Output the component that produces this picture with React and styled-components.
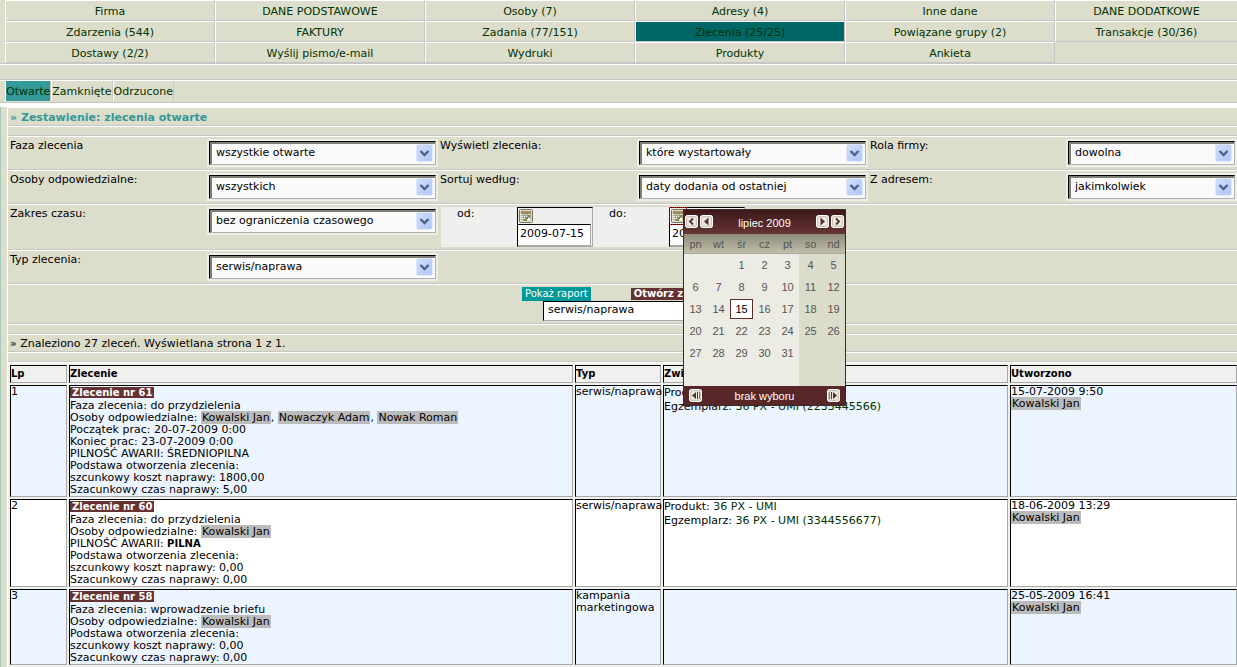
import React from 'react'
import styled, { createGlobalStyle } from 'styled-components'

const navItems = [
  'Firma', 'DANE PODSTAWOWE', 'Osoby (7)', 'Adresy (4)', 'Inne dane', 'DANE DODATKOWE',
  'Zdarzenia (544)', 'FAKTURY', 'Zadania (77/151)', 'Zlecenia (25/25)', 'Powiązane grupy (2)', 'Transakcje (30/36)',
  'Dostawy (2/2)', 'Wyślij pismo/e-mail', 'Wydruki', 'Produkty', 'Ankieta',
]

const tabs = ['Otwarte', 'Zamknięte', 'Odrzucone']

const orders = [
  {
    lp: 1,
    nr: 61,
    phase: 'do przydzielenia',
    people: ['Kowalski Jan', 'Nowaczyk Adam', 'Nowak Roman'],
    extra: ['Początek prac: 20-07-2009 0:00', 'Koniec prac: 23-07-2009 0:00'],
    priority: 'ŚREDNIOPILNA',
    cost: '1800,00',
    time: '5,00',
    type: ['serwis/naprawa'],
    product: '36 PX - UMI',
    unit: '36 PX - UMI (2233445566)',
    created: '15-07-2009 9:50',
  },
  {
    lp: 2,
    nr: 60,
    phase: 'do przydzielenia',
    people: ['Kowalski Jan'],
    extra: [],
    priority: 'PILNA',
    urgent: true,
    cost: '0,00',
    time: '0,00',
    type: ['serwis/naprawa'],
    product: '36 PX - UMI',
    unit: '36 PX - UMI (3344556677)',
    created: '18-06-2009 13:29',
  },
  {
    lp: 3,
    nr: 58,
    phase: 'wprowadzenie briefu',
    people: ['Kowalski Jan'],
    extra: [],
    cost: '0,00',
    time: '0,00',
    type: ['kampania', 'marketingowa'],
    created: '25-05-2009 16:41',
  },
]

const SelectField = ({ id, value }) => (
  <SelectFrame>
    <select id={id} defaultValue={value}>
      <option>{value}</option>
    </select>
    <svg width="17" height="18" viewBox="0 0 17 18" aria-hidden="true">
      <defs>
        <linearGradient id={`${id}-fill`} x1="0" y1="0" x2="1" y2="1">
          <stop offset="0" stopColor="#d3e0fd" />
          <stop offset="1" stopColor="#adc4f6" />
        </linearGradient>
      </defs>
      <rect x="1" y="1" width="15" height="16" rx="1" fill={`url(#${id}-fill)`} stroke="#c3d3f8" />
      <path d="M4.5 7 L8.5 11 L12.5 7" fill="none" stroke="#4d6185" strokeWidth="2.4" />
    </svg>
  </SelectFrame>
)

const CalendarIcon = () => (
  <svg width="14" height="14" viewBox="0 0 14 14" aria-hidden="true">
    <rect x="0.5" y="0.5" width="13" height="13" rx="1" fill="#e2dfcf" stroke="#77705f" />
    <rect x="2" y="2" width="10" height="3" fill="#a08b62" />
    <path d="M2 6h9v5H2z" fill="#fbfaf2" />
    <path d="M2 6.5h10M2 8.5h10M2 10.5h6M4.5 5v7M6.5 5v7M8.5 5v5M11.5 5v5" stroke="#a9a68f" />
    <path d="M7 8h2v2H7zM9 6h2v2H9zM5 10h3v2H5z" fill="#76854f" />
  </svg>
)

const arrows = {
  prevYear: <path d="M8 3.5 L5 6.5 L8 9.5" fill="none" stroke="#5c2c2c" strokeWidth="1.8" />,
  prevMonth: <path d="M8.5 2.5v8L4 6.5z" fill="#5c2c2c" />,
  nextMonth: <path d="M4.5 2.5v8L9 6.5z" fill="#5c2c2c" />,
  nextYear: <path d="M5 3.5 L8 6.5 L5 9.5" fill="none" stroke="#5c2c2c" strokeWidth="1.8" />,
  first: <path d="M7 3v7L3 6.5zM8 3h1v7H8zM10 3h0.6v7H10z" fill="#5c2c2c" />,
  last: <path d="M6 3v7l4-3.5zM4 3h1v7H4zM2.4 3H3v7h-0.6z" fill="#5c2c2c" />,
}

const ArrowButton = ({ kind, label }) => (
  <IconButton type="button" aria-label={label}>
    <svg width="13" height="13" viewBox="0 0 13 13">
      <rect x="0.7" y="0.7" width="11.6" height="11.6" rx="2" fill="#eeece2" stroke="#fff" strokeWidth="1.4" />
      <rect x="1.7" y="1.7" width="9.6" height="9.6" rx="1" fill="none" stroke="#b9a79d" strokeWidth="0.8" />
      {arrows[kind]}
    </svg>
  </IconButton>
)

const weekdays = ['pn', 'wt', 'śr', 'cz', 'pt', 'so', 'nd']

// July 2009 starts on Wednesday, six weeks are always drawn
const days = Array.from({ length: 42 }, (_, i) => (i >= 2 && i < 33 ? i - 1 : ''))

const Calendar = () => (
  <CalendarBox>
    <CalendarHead>
      <ArrowButton kind="prevYear" label="Poprzedni rok" />
      <ArrowButton kind="prevMonth" label="Poprzedni miesiąc" />
      <span>lipiec 2009</span>
      <ArrowButton kind="nextMonth" label="Następny miesiąc" />
      <ArrowButton kind="nextYear" label="Następny rok" />
    </CalendarHead>
    <Weekdays>
      {weekdays.map((d) => <span key={d}>{d}</span>)}
    </Weekdays>
    <Days>
      {days.map((d, i) => (
        <Day key={i} $weekend={i % 7 > 4}>
          {d && <DayButton type="button" $today={d === 15}>{d}</DayButton>}
        </Day>
      ))}
    </Days>
    <CalendarFoot>
      <ArrowButton kind="first" label="Początek" />
      <span>brak wyboru</span>
      <ArrowButton kind="last" label="Koniec" />
    </CalendarFoot>
  </CalendarBox>
)

const DateField = ({ id, label, active, children }) => (
  <DateGroup>
    <label htmlFor={id}>{label}</label>
    <DateBox>
      <PickButton type="button" aria-label="Kalendarz" $active={active}>
        <CalendarIcon />
      </PickButton>
      <input id={id} type="text" defaultValue="2009-07-15" />
      {children}
    </DateBox>
  </DateGroup>
)

const OrderRow = ({ order }) => (
  <tr>
    <td>{order.lp}</td>
    <td>
      <OrderTitle>
        <OrderLink href="#">Zlecenie nr {order.nr}</OrderLink>
      </OrderTitle>
      <div>Faza zlecenia: {order.phase}</div>
      <div>
        Osoby odpowiedzialne:{' '}
        {order.people.map((p, i) => (
          <React.Fragment key={p}>
            {i > 0 && ', '}
            <Person href="#">{p}</Person>
          </React.Fragment>
        ))}
      </div>
      {order.extra.map((line) => <div key={line}>{line}</div>)}
      {order.priority && (
        <div>PILNOŚĆ AWARII: {order.urgent ? <b>{order.priority}</b> : order.priority}</div>
      )}
      <div>Podstawa otworzenia zlecenia:</div>
      <div>szcunkowy koszt naprawy: {order.cost}</div>
      <div>Szacunkowy czas naprawy: {order.time}</div>
    </td>
    <td>{order.type.map((t) => <div key={t}>{t}</div>)}</td>
    <td>
      {order.product && (
        <>
          <Related>Produkt: <a href="#">{order.product}</a></Related>
          <Related>Egzemplarz: <a href="#">{order.unit}</a></Related>
        </>
      )}
    </td>
    <td>
      <div>{order.created}</div>
      <Person href="#">Kowalski Jan</Person>
    </td>
  </tr>
)

const App = () => {
  return (
    <Page>
      <GlobalStyle />
      <Nav>
        {navItems.map((item) => (
          <NavLink key={item} href="#" $active={item.startsWith('Zlecenia')}>{item}</NavLink>
        ))}
      </Nav>
      <Strip />
      <TabBar>
        {tabs.map((tab, i) => (
          <Tab key={tab} href="#" $active={i === 0}>{tab}</Tab>
        ))}
      </TabBar>
      <Main>
        <TitleRow>
          <h1>» Zestawienie: zlecenia otwarte</h1>
        </TitleRow>
        <Spacer />
        <FilterRow>
          <label htmlFor="phase">Faza zlecenia</label>
          <SelectField id="phase" value="wszystkie otwarte" />
          <label htmlFor="show">Wyświetl zlecenia:</label>
          <SelectField id="show" value="które wystartowały" />
          <label htmlFor="role">Rola firmy:</label>
          <SelectField id="role" value="dowolna" />
        </FilterRow>
        <FilterRow>
          <label htmlFor="people">Osoby odpowiedzialne:</label>
          <SelectField id="people" value="wszystkich" />
          <label htmlFor="sort">Sortuj według:</label>
          <SelectField id="sort" value="daty dodania od ostatniej" />
          <label htmlFor="address">Z adresem:</label>
          <SelectField id="address" value="jakimkolwiek" />
        </FilterRow>
        <FilterRow $tall>
          <label htmlFor="range">Zakres czasu:</label>
          <SelectField id="range" value="bez ograniczenia czasowego" />
          <DateRange>
            <DateField id="from" label="od:" />
            <DateField id="to" label="do:" active>
              <Calendar />
            </DateField>
          </DateRange>
        </FilterRow>
        <FilterRow>
          <label htmlFor="type">Typ zlecenia:</label>
          <SelectField id="type" value="serwis/naprawa" />
        </FilterRow>
        <ActionRow>
          <div>
            <ReportButton type="button">Pokaż raport</ReportButton>
            <OpenButton type="button">Otwórz zlecenie</OpenButton>
          </div>
          <PlainSelect aria-label="Typ nowego zlecenia" defaultValue="serwis/naprawa">
            <option>serwis/naprawa</option>
          </PlainSelect>
        </ActionRow>
        <Spacer />
        <InfoRow>» Znaleziono 27 zleceń. Wyświetlana strona 1 z 1.</InfoRow>
        <Spacer />
        <TableArea>
          <OrderTable>
            <colgroup>
              <col width="57" />
              <col />
              <col width="86" />
              <col width="345" />
              <col width="227" />
            </colgroup>
            <thead>
              <tr>
                <th>Lp</th>
                <th>Zlecenie</th>
                <th>Typ</th>
                <th>Związane z</th>
                <th>Utworzono</th>
              </tr>
            </thead>
            <tbody>
              {orders.map((order) => <OrderRow key={order.nr} order={order} />)}
            </tbody>
          </OrderTable>
        </TableArea>
      </Main>
    </Page>
  )
}

const GlobalStyle = createGlobalStyle`
  * {
    box-sizing: border-box;
  }
  body {
    margin: 0;
    background: #fff;
    color: #000;
    font: 11px/12px "DejaVu Sans", Verdana, sans-serif;
  }
  a {
    color: #003300;
    text-decoration: none;
  }
  button, input, select {
    font: inherit;
    color: inherit;
    margin: 0;
    padding: 0;
    border-radius: 0;
  }
`

const Page = styled.div`
  display: flex;
  flex-direction: column;
  min-height: 100vh;
  overflow-x: clip;
`

const Nav = styled.nav`
  display: grid;
  grid-template-columns: repeat(5, 210fr) 182fr;
  padding-left: 5px;
  background: #ddddcc;
  border-bottom: 1px solid #c6c6c6;
`

const NavLink = styled.a`
  height: 21px;
  line-height: 22px;
  text-align: center;
  border: 1px solid;
  border-color: #fff #c6c6c6 #c6c6c6 #fff;
  background: ${(p) => (p.$active ? '#006666' : '#ddddcc')};
  &:nth-child(6n) {
    border-right: 0;
  }
`

const Strip = styled.div`
  height: 16px;
  background: #ddddcc;
  border-top: 1px solid #fff;
  border-bottom: 1px solid #c6c6c6;
`

const TabBar = styled.nav`
  display: flex;
  height: 23px;
  padding: 0 0 1px 5px;
  background: #ddddcc;
  border-top: 1px solid #fff;
  border-bottom: 1px solid #c6c6c6;
`

const Tab = styled.a`
  line-height: 22px;
  border-left: 1px solid #fff;
  border-right: 1px solid #c6c6c6;
  background: ${(p) => (p.$active ? '#339999' : 'transparent')};
`

const Main = styled.main`
  flex: 1;
  display: flex;
  flex-direction: column;
  margin-top: 4px;
  padding-left: 6px;
  background: #ddddcc;
  border-left: 1px solid #a3c9bd;
`

const Row = styled.div`
  border: 1px solid;
  border-color: #fff transparent #c6c6c6 #fff;
  border-right: 0;
`

const Spacer = styled(Row)`
  height: 10px;
`

const TitleRow = styled(Row)`
  height: 19px;
  padding-left: 2px;
  h1 {
    margin: 0;
    color: #339999;
    font-size: 11px;
    line-height: 20px;
  }
`

const InfoRow = styled(Row)`
  height: 18px;
  padding-left: 2px;
  line-height: 17px;
`

const FilterRow = styled(Row)`
  display: grid;
  grid-template-columns: 199fr 231fr 199fr 231fr 198fr 171fr;
  align-items: start;
  height: ${(p) => (p.$tall ? 46 : 34)}px;
  > label {
    padding: 3px 0 0 2px;
  }
`

const SelectFrame = styled.div`
  display: grid;
  height: 28px;
  margin: 2px 0 0;
  border: 2px solid #ededea;
  select, svg {
    grid-area: 1 / 1;
  }
  select {
    appearance: none;
    min-width: 0;
    height: 24px;
    padding: 0 24px 0 6px;
    background: #fafafa;
    border: 1px solid;
    border-color: #000 #b0b0b0 #b0b0b0 #000;
    box-shadow: inset 2px 2px 0 #807f76;
  }
  svg {
    z-index: 1;
    justify-self: end;
    align-self: center;
    margin-right: 3px;
    pointer-events: none;
  }
`

const DateRange = styled.div`
  grid-column: span 3;
  display: flex;
  justify-self: start;
  margin: 2px 0 0 3px;
  background: #efefed;
`

const DateGroup = styled.div`
  display: flex;
  label {
    width: 76px;
    padding: 1px 0 0 16px;
  }
`

const DateBox = styled.div`
  position: relative;
  width: 76px;
  height: 40px;
  border: 1px solid;
  border-color: #000 #a8a8a8 #a8a8a8 #000;
  input {
    display: block;
    width: 73px;
    height: 22px;
    padding: 0 0 4px 2px;
    background: #fff;
    border: 1px solid;
    border-color: #000 #a8a8a8 #a8a8a8 #000;
    border-left: 0;
  }
`

const PickButton = styled.button`
  display: block;
  width: 16px;
  height: 16px;
  padding: 1px;
  line-height: 0;
  background: none;
  border: 0;
  outline: ${(p) => (p.$active ? '1px dotted #a02020' : '0')};
`

const CalendarBox = styled.div`
  position: absolute;
  z-index: 5;
  left: 13px;
  top: 1px;
  width: 163px;
  border: 1px solid #3a2a2a;
  background: #ecece4;
  color: #555;
  font: 11px/12px "Liberation Sans", Arial, sans-serif;
`

const CalendarHead = styled.div`
  display: flex;
  align-items: center;
  gap: 2px;
  height: 24px;
  padding: 0 1px 2px;
  color: #fff;
  background: linear-gradient(#3d1818, #663535);
  span {
    flex: 1;
    padding-top: 3px;
    text-align: center;
  }
`

const IconButton = styled.button`
  width: 13px;
  height: 13px;
  line-height: 0;
  background: none;
  border: 0;
`

const Weekdays = styled.div`
  display: grid;
  grid-template-columns: repeat(7, 1fr);
  height: 20px;
  line-height: 20px;
  text-align: center;
  background: linear-gradient(#8e8c79, #c0bda8);
  border-bottom: 1px solid #aaa99a;
`

const Days = styled.div`
  display: grid;
  grid-template-columns: repeat(7, 1fr);
  grid-auto-rows: 22px;
`

const Day = styled.div`
  padding: 1px 0;
  background: ${(p) => (p.$weekend ? '#dcdcca' : 'transparent')};
`

const DayButton = styled.button`
  display: block;
  width: 100%;
  height: 20px;
  color: ${(p) => (p.$today ? '#000' : '#555')};
  background: ${(p) => (p.$today ? '#fff' : 'none')};
  border: 1px solid ${(p) => (p.$today ? '#5c2c2c' : 'transparent')};
`

const CalendarFoot = styled.div`
  display: flex;
  align-items: center;
  justify-content: space-between;
  height: 19px;
  padding: 0 5px;
  color: #fff;
  background: #572626;
`

const ActionRow = styled(Row)`
  height: 40px;
  padding: 2px 0 0 514px;
  > div {
    display: flex;
    gap: 40px;
  }
`

const ReportButton = styled.button`
  height: 14px;
  padding: 0 3px;
  font-size: 10px;
  line-height: 14px;
  color: #fff;
  background: #009999;
  border: 0;
`

const OpenButton = styled.button`
  height: 12px;
  margin-top: 1px;
  padding: 0 3px;
  font-size: 10px;
  font-weight: bold;
  line-height: 12px;
  color: #fff;
  background: #663333;
  border: 0;
`

const PlainSelect = styled.select`
  appearance: none;
  display: block;
  width: 200px;
  height: 20px;
  margin-left: 21px;
  padding: 0 4px 2px;
  background: #fff;
  border: 1px solid;
  border-color: #000 #a8a8a8 #a8a8a8 #000;
`

const TableArea = styled.div`
  flex: 1;
  margin-right: -2px;
  background: #f0f0ee;
  border-top: 1px solid #fff;
  border-left: 1px solid #fff;
`

const OrderTable = styled.table`
  width: 100%;
  table-layout: fixed;
  border-spacing: 2px;
  th, td {
    padding: 0;
    text-align: left;
    vertical-align: top;
    border: 1px solid;
    border-color: #000 #a8a8a8 #a8a8a8 #000;
  }
  th {
    font-size: 10px;
    line-height: 16px;
  }
  tbody tr {
    background: #fff;
  }
  td {
    white-space: nowrap;
  }
  tbody tr:nth-child(odd) td {
    background: #ecf5ff;
  }
  b {
    font-size: 10px;
  }
`

const OrderTitle = styled.div`
  height: 14px;
  line-height: 14px;
`

const OrderLink = styled.a`
  padding: 0 2px;
  font-size: 10px;
  font-weight: bold;
  color: #fff;
  background: #663333;
`

const Person = styled.a`
  padding: 0 1px;
  color: #000;
  background: #bbb;
`

const Related = styled.div`
  line-height: 14px;
`

export default App
